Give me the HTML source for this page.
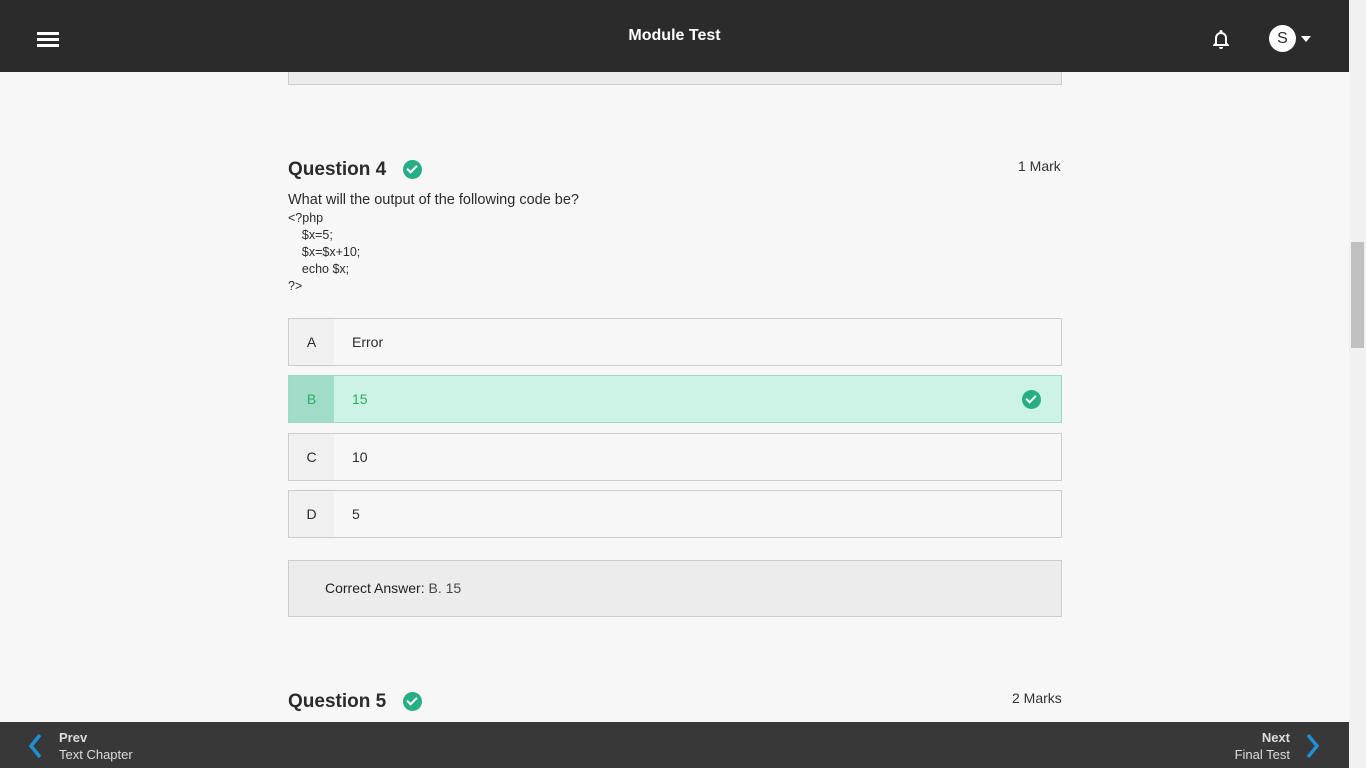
<!DOCTYPE html>
<html><head><meta charset="utf-8"><style>
*{box-sizing:border-box;margin:0;padding:0}
body{width:1366px;height:768px;overflow:hidden;background:#f7f7f7;font-family:"Liberation Sans",sans-serif;color:#2b2b2b;position:relative}
.hdr{position:absolute;left:0;top:0;width:1349px;height:72px;background:#2b2b2b;color:#fff;z-index:5}
.ftr{position:absolute;left:0;top:722px;width:1349px;height:46px;background:#383838;color:#ddd;z-index:5}
.sb{position:absolute;left:1349px;top:0;width:17px;height:768px;background:#f1f1f1}
.thumb{position:absolute;left:1351px;top:242px;width:13px;height:106px;background:#c1c1c1}
.box{position:absolute;left:288px;width:774px;border:1px solid #ccc}
.opt{height:48px;background:#f7f7f7;display:flex;align-items:center;font-size:14px}
.opt .l{width:45px;height:100%;background:#f0f0f0;display:flex;align-items:center;justify-content:center}
.opt .t{padding-left:18px;flex:1}
.chk{position:absolute;width:19px;height:19px;border-radius:50%;background:#27ae87}
.chk:after{content:"";position:absolute;left:6px;top:3px;width:4px;height:8px;border:solid #fff;border-width:0 2.5px 2.5px 0;transform:rotate(45deg)}
</style></head><body>
<div class="hdr">
 <div style="position:absolute;left:37px;top:32px;width:22px;height:3px;background:#fff;box-shadow:0 6px 0 #fff,0 12px 0 #fff"></div>
 <div style="position:absolute;left:0;width:1349px;top:27px;text-align:center;font-weight:bold;font-size:16px">Module Test</div>
 <svg style="position:absolute;left:1211px;top:28px" width="20" height="22" viewBox="0 0 20 22"><path d="M10 2a1.5 1.5 0 0 1 1.5 1.5v.6A6 6 0 0 1 16 10v5l2 2v1H2v-1l2-2v-5a6 6 0 0 1 4.5-5.9v-.6A1.5 1.5 0 0 1 10 2zM6 10v6h8v-6a4 4 0 0 0-8 0z M8 19h4a2 2 0 0 1-4 0z" fill="#fff"/></svg>
 <div style="position:absolute;left:1269px;top:25px;width:27px;height:27px;border-radius:50%;background:#fff;color:#2b2b2b;font-size:16px;text-align:center;line-height:27px">S</div>
 <div style="position:absolute;left:1301px;top:36px;border-left:5px solid transparent;border-right:5px solid transparent;border-top:6px solid #fff"></div>
</div>
<div class="box" style="top:60px;height:25px;background:#ececec;border-top:none"></div>
<div style="position:absolute;left:288px;top:159px;font-size:19px;font-weight:bold">Question 4</div>
<div class="chk" style="left:403px;top:160px"></div>
<div style="position:absolute;left:1018px;top:158px;font-size:14px;color:#333">1 Mark</div>
<div style="position:absolute;left:288px;top:192px;font-size:14.5px">What will the output of the following code be?</div>
<div style="position:absolute;left:288px;top:210px;font-size:12.5px;line-height:17px">&lt;?php<br>&nbsp;&nbsp;&nbsp;&nbsp;$x=5;<br>&nbsp;&nbsp;&nbsp;&nbsp;$x=$x+10;<br>&nbsp;&nbsp;&nbsp;&nbsp;echo $x;<br>?&gt;</div>
<div class="box opt" style="top:318px"><div class="l">A</div><div class="t">Error</div></div>
<div class="box opt" style="top:375px;background:#cdf2e6;border-color:#9fd9c4;color:#27ae60"><div class="l" style="background:#a0dcc8">B</div><div class="t">15</div></div>
<div class="chk" style="left:1022px;top:390px"></div>
<div class="box opt" style="top:433px"><div class="l">C</div><div class="t">10</div></div>
<div class="box opt" style="top:490px"><div class="l">D</div><div class="t">5</div></div>
<div class="box" style="top:560px;height:57px;background:#ececec;font-size:14px;padding:19px 0 0 36px"><b style="font-weight:normal;color:#222">Correct Answer:</b> <span style="color:#444">B. 15</span></div>
<div style="position:absolute;left:288px;top:691px;font-size:19px;font-weight:bold">Question 5</div>
<div class="chk" style="left:403px;top:692px"></div>
<div style="position:absolute;left:1012px;top:690px;font-size:14px;color:#333">2 Marks</div>
<div class="ftr">
 <svg style="position:absolute;left:27px;top:11px" width="16" height="26"><path d="M13 2L4 13l9 11" stroke="#1e8fd6" stroke-width="3.5" fill="none"/></svg>
 <div style="position:absolute;left:59px;top:7px;font-size:13px;line-height:17px"><b>Prev</b><br>Text Chapter</div>
 <div style="position:absolute;right:59px;top:7px;font-size:13px;line-height:17px;text-align:right"><b>Next</b><br>Final Test</div>
 <svg style="position:absolute;left:1305px;top:11px" width="16" height="26"><path d="M3 2l9 11-9 11" stroke="#1e8fd6" stroke-width="3.5" fill="none"/></svg>
</div>
<div class="sb"></div><div class="thumb"></div>
</body></html>
